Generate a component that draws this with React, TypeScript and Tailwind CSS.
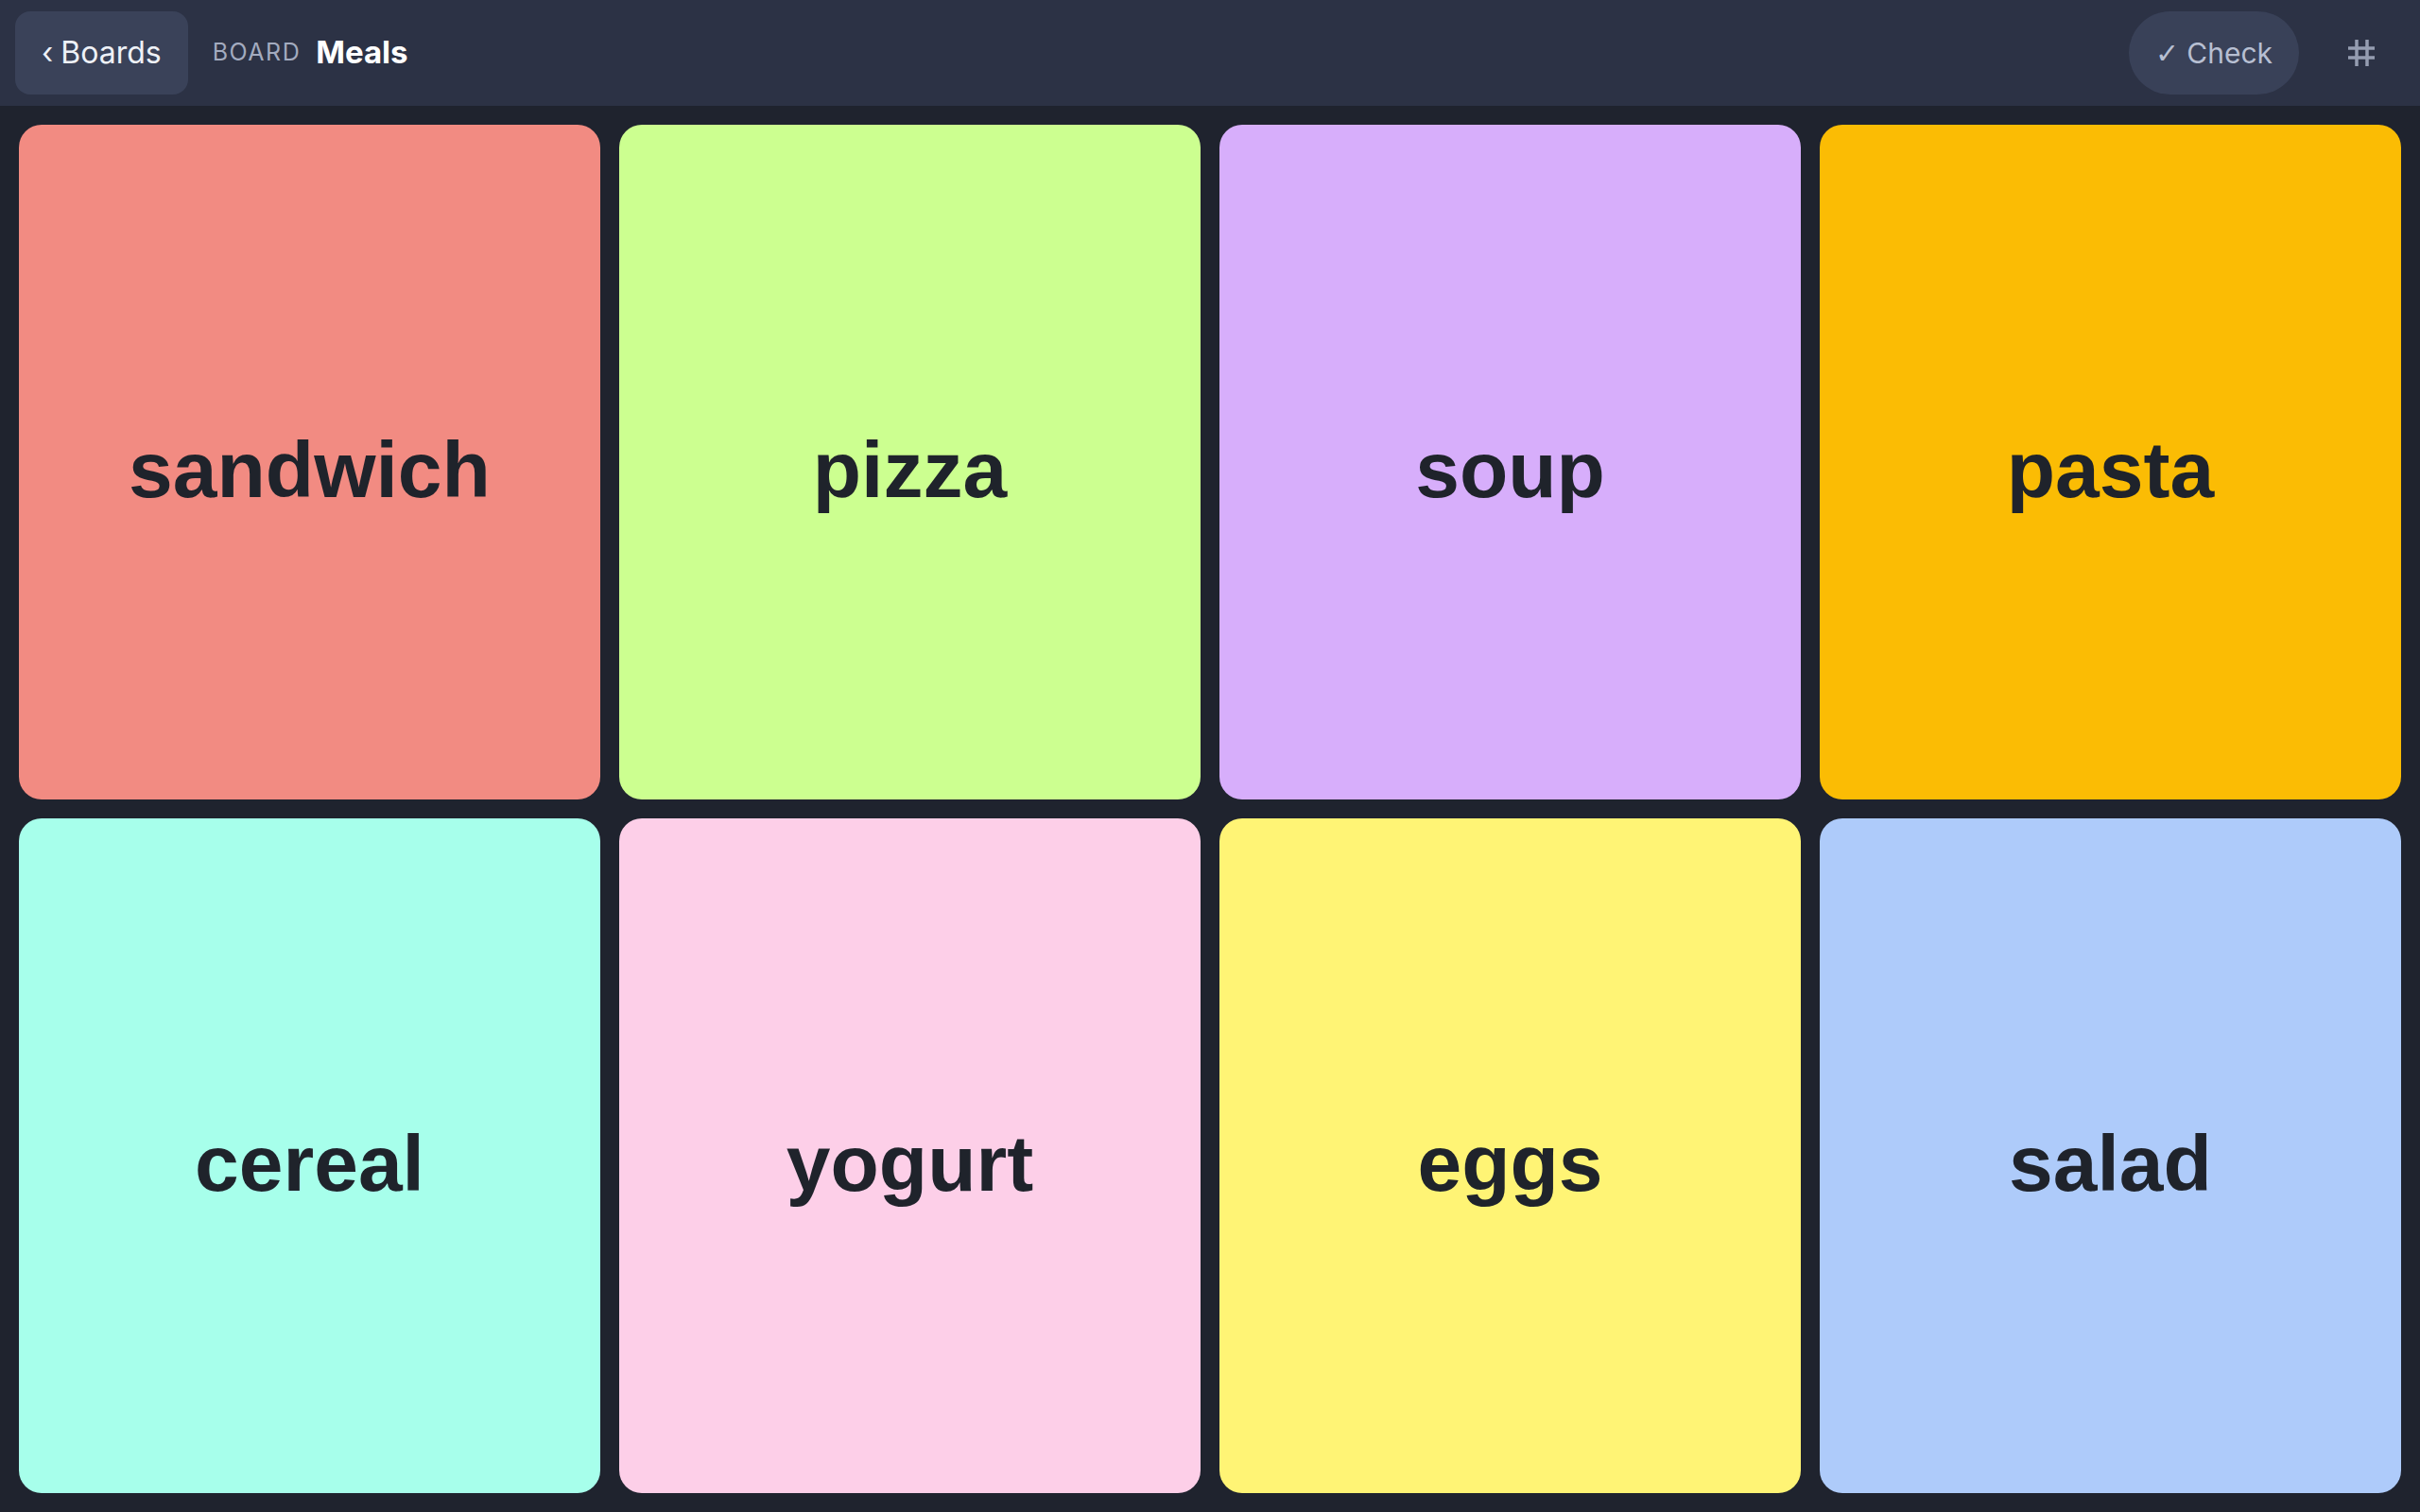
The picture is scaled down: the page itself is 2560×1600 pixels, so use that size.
import React from 'react';

type Card = { label: string; color: string };

const cards: Card[] = [
    { label: 'sandwich', color: 'bg-[#f28b82]' },
    { label: 'pizza', color: 'bg-[#ccff90]' },
    { label: 'soup', color: 'bg-[#d7aefb]' },
    { label: 'pasta', color: 'bg-[#fbbc04]' },
    { label: 'cereal', color: 'bg-[#a7ffeb]' },
    { label: 'yogurt', color: 'bg-[#fdcfe8]' },
    { label: 'eggs', color: 'bg-[#fff475]' },
    { label: 'salad', color: 'bg-[#aecbfa]' },
];

const GridIcon: React.FC = () => (
    <svg width="30" height="30" viewBox="0 0 30 30" fill="none" stroke="currentColor" strokeWidth="3.5">
        <line x1="10" y1="1" x2="10" y2="29" />
        <line x1="21" y1="1" x2="21" y2="29" />
        <line x1="1" y1="10" x2="29" y2="10" />
        <line x1="1" y1="20" x2="29" y2="20" />
    </svg>
);

const App: React.FC = () => {
    return (
        <div className="flex h-[1600px] w-[2560px] flex-col bg-[#1f232e] font-['Inter',sans-serif]">
            <header className="flex h-[112px] shrink-0 items-center bg-[#2c3245] pl-4 pr-[22px]">
                <button className="flex h-[88px] items-center rounded-2xl bg-[#3a4259] px-7 text-[32px] text-[#eef1f7]">
                    <span className="mr-2">‹</span>Boards
                </button>
                <span className="ml-[26px] text-[25px] tracking-[0.06em] text-[#a3abbf]">BOARD</span>
                <span className="ml-[16px] text-[33px] font-bold text-white">Meals</span>
                <div className="flex-1" />
                <button className="flex h-[88px] items-center rounded-full bg-[#394158] px-[28px] text-[30px] text-[#b7bfd2]">
                    <span className="mr-2 font-['DejaVu_Sans',sans-serif] font-bold">✓</span>Check
                </button>
                <button className="ml-[26px] flex h-[80px] w-[80px] items-center justify-center text-[#959db1]">
                    <GridIcon />
                </button>
            </header>
            <main className="grid flex-1 grid-cols-4 grid-rows-2 gap-5 p-5">
                {cards.map((card) => (
                    <div
                        key={card.label}
                        className={`${card.color} flex items-center justify-center rounded-3xl`}
                    >
                        <span className="pt-4 font-['Liberation_Sans',Arial,sans-serif] text-[84px] font-bold text-[#1f232b]">
                            {card.label}
                        </span>
                    </div>
                ))}
            </main>
        </div>
    );
};

export default App;
